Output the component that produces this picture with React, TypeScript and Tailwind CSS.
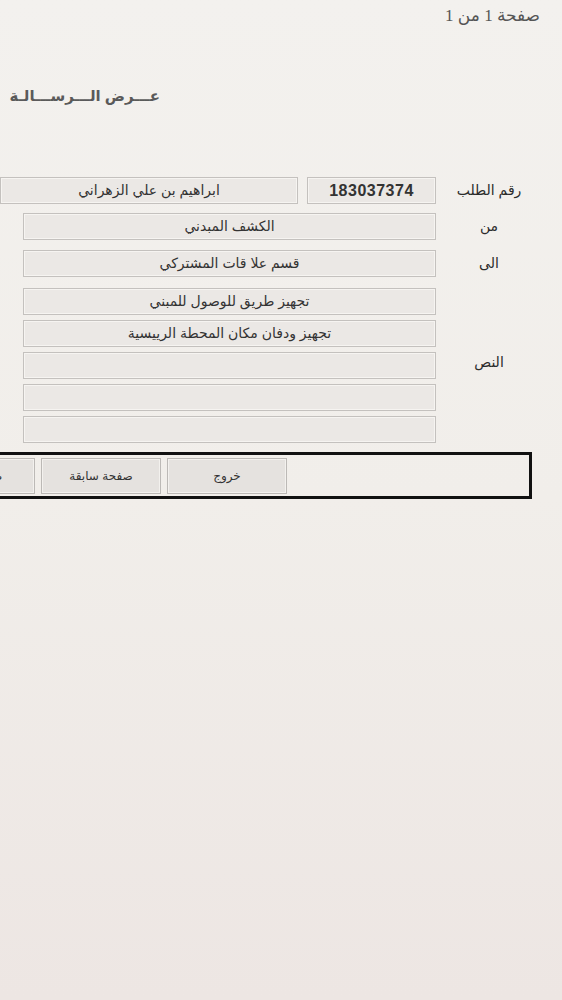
import React from "react";

const AR = { fontFamily: '"Liberation Sans", "DejaVu Sans", Arial, sans-serif' };
const SERIF = { fontFamily: '"Liberation Serif", "DejaVu Serif", "DejaVu Sans", serif' };

function Field({ w, children, bold }: { w: string; children?: React.ReactNode; bold?: boolean }) {
  return (
    <div
      className={`${w} h-[27px] shrink-0 flex items-center justify-center border border-[#c4c1be] bg-[#ebe8e5] shadow-[inset_0_0_0_1px_#f6f4f1] text-[#333] ${
        bold ? "text-[16px] font-bold tracking-[0.5px]" : "text-[14px]"
      }`}
      style={AR}
    >
      {children}
    </div>
  );
}

function Label({ children }: { children?: React.ReactNode }) {
  return (
    <div className="w-[86px] mr-[30px] ml-[10px] shrink-0 text-center text-[14px] text-[#2b2b2b]" style={AR}>
      {children}
    </div>
  );
}

function Btn({ children }: { children: React.ReactNode }) {
  return (
    <div
      className="w-[120px] h-[36px] shrink-0 flex items-center justify-center border border-[#bcb9b6] bg-[#e5e2df] shadow-[inset_0_0_0_1px_#f3f1ee] text-[12px] text-[#333]"
      style={AR}
    >
      {children}
    </div>
  );
}

export default function App() {
  return (
    <div
      dir="rtl"
      className="w-[562px] h-[1000px] overflow-hidden bg-gradient-to-b from-[#f3f1ee] via-[#f1eeea] to-[#ede6e3]"
    >
      <div className="h-[32px] pt-[5px] pr-[22px] text-[17px] leading-[22px] text-[#555]" style={SERIF}>
        صفحة 1 من 1
      </div>

      <div className="mt-[54px] mr-[402px] text-[15px] leading-[20px] font-bold text-[#5a5a5a] whitespace-nowrap" style={AR}>
        عـــرض الـــرســـالـة
      </div>

      <div className="mt-[71px] w-[712px]">
        <div className="flex items-center h-[27px]">
          <Label>رقم الطلب</Label>
          <Field w="w-[129px]" bold>
            183037374
          </Field>
          <div className="w-[9px] shrink-0" />
          <Field w="w-[298px]">ابراهيم بن علي الزهراني</Field>
        </div>

        <div className="flex items-center h-[27px] mt-[9px]">
          <Label>من</Label>
          <Field w="w-[413px]">الكشف المبدني</Field>
        </div>

        <div className="flex items-center h-[27px] mt-[10px]">
          <Label>الى</Label>
          <Field w="w-[413px]">قسم علا قات المشتركي</Field>
        </div>

        <div className="flex mt-[11px]">
          <div className="w-[86px] mr-[30px] ml-[10px] shrink-0 flex items-center justify-center">
            <span className="text-[14px] text-[#2b2b2b] mb-[6px]" style={AR}>
              النص
            </span>
          </div>
          <div className="flex flex-col gap-[5px]">
            <Field w="w-[413px]">تجهيز طريق للوصول للمبني</Field>
            <Field w="w-[413px]">تجهيز ودفان مكان المحطة الرييسية</Field>
            <Field w="w-[413px]" />
            <Field w="w-[413px]" />
            <Field w="w-[413px]" />
          </div>
        </div>

        <div className="mt-[9px] mr-[30px] h-[47px] border-[3px] border-[#111] flex items-center gap-[6px] pr-[242px]">
          <Btn>خروج</Btn>
          <Btn>صفحة سابقة</Btn>
          <Btn>صفحة تالية</Btn>
          <Btn>صفحة أولى</Btn>
        </div>
      </div>
    </div>
  );
}
